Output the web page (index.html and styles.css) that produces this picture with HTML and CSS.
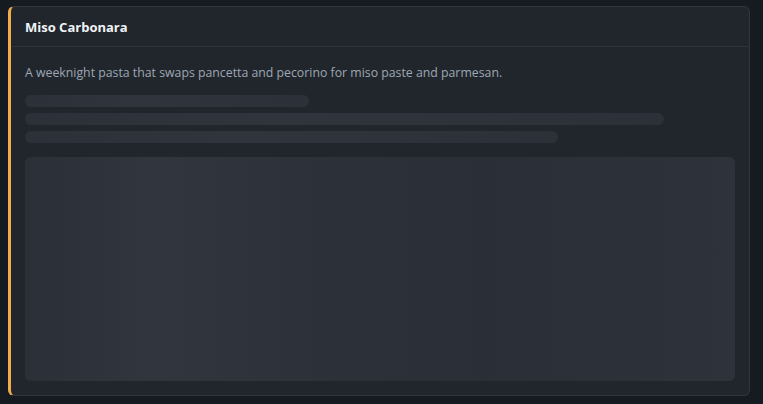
FILE: index.html
```html
<!DOCTYPE html>
<html>
<head>
<meta charset="utf-8">
<link rel="stylesheet" href="styles.css">
</head>
<body>
<div class="card">
  <div class="card-header">
    <h2 class="title">Miso Carbonara</h2>
  </div>
  <div class="card-body">
    <p class="desc">A weeknight pasta that swaps pancetta and pecorino for miso paste and parmesan.</p>
    <div class="lines">
      <div class="bar bar-1"></div>
      <div class="bar bar-2"></div>
      <div class="bar bar-3"></div>
    </div>
    <div class="block"></div>
  </div>
</div>
</body>
</html>
```

FILE: styles.css
```css
html, body {
  margin: 0;
  padding: 0;
  background: #161b22;
}
body {
  padding: 6px 8px;
  font-family: "Open Sans", "Noto Sans", "Liberation Sans", sans-serif;
}
.card {
  width: 742px;
  height: 390px;
  box-sizing: border-box;
  background: #21262d;
  border: 1px solid #30363d;
  border-left: 3px solid #f2ac4b;
  border-radius: 6px;
  display: flex;
  flex-direction: column;
}
.card-header {
  height: 40px;
  box-sizing: border-box;
  border-bottom: 1px solid #2d333b;
  padding: 0 14px;
  display: flex;
  align-items: center;
}
.title {
  margin: 0;
  font-size: 13px;
  font-weight: 700;
  color: #f0f3f6;
}
.card-body {
  flex: 1;
  padding: 17px 14px 14px;
  display: flex;
  flex-direction: column;
}
.desc {
  margin: 0;
  font-size: 12.3px;
  line-height: 18px;
  color: #9ea7b2;
}
.lines {
  margin-top: 13px;
  display: flex;
  flex-direction: column;
  gap: 6px;
}
.bar {
  height: 12px;
  border-radius: 6px;
  background: linear-gradient(90deg, #2c3139 0%, #30353d 40%, #2c3139 100%);
}
.bar-1 { width: 284px; }
.bar-2 { width: 639px; }
.bar-3 { width: 533px; }
.block {
  margin-top: 14px;
  flex: 1;
  border-radius: 6px;
  background: linear-gradient(90deg, #2b3038 0%, #31363e 18%, #2c3139 45%, #2a2f37 65%, #2e333b 100%);
}
```
